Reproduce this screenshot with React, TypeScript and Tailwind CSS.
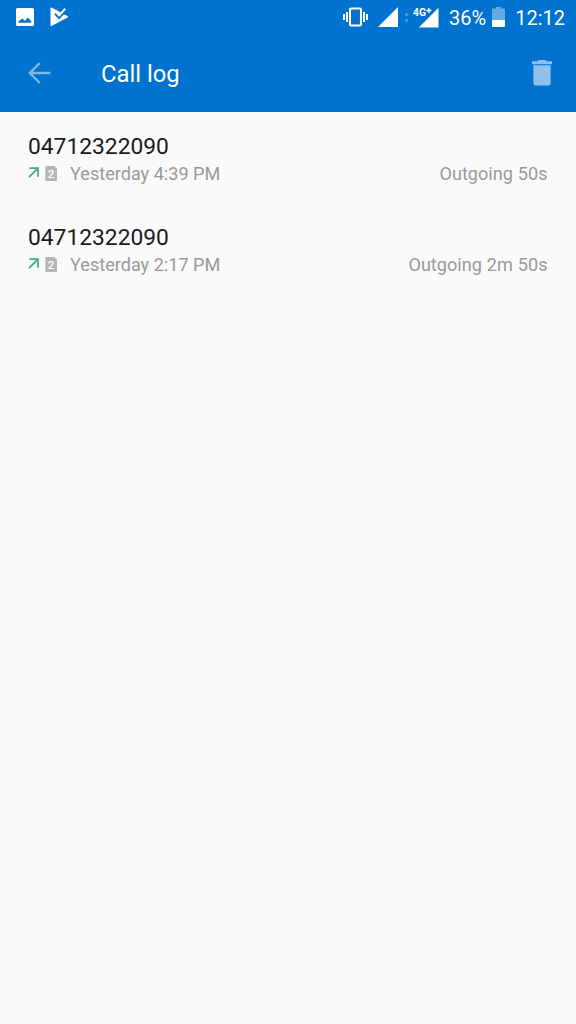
interface Call {
  id: number
  number: string
  time: string
  duration: string
}

const CALLS: Call[] = [
  { id: 1, number: '04712322090', time: 'Yesterday 4:39 PM', duration: 'Outgoing 50s' },
  { id: 2, number: '04712322090', time: 'Yesterday 2:17 PM', duration: 'Outgoing 2m 50s' },
]

function ImageIcon() {
  return (
    <svg className="w-[18px] h-[18px] shrink-0" viewBox="0 0 18 18">
      <path fill="white" fillRule="evenodd" d="M1.5 0h15A1.5 1.5 0 0 1 18 1.5v15a1.5 1.5 0 0 1-1.5 1.5h-15A1.5 1.5 0 0 1 0 16.5v-15A1.5 1.5 0 0 1 1.5 0zM2.5 14.8h12.8v-1.2l-3.4-4.2-2.9 3.5-2.5-2.5-4 3.2z" />
    </svg>
  )
}

function PlayCheckIcon() {
  return (
    <svg className="w-[19px] h-[20px] shrink-0" viewBox="0 0 19 20">
      <path fill="white" d="M.5 1.2v17.3q0 1.1 1 .6L17.6 10.5q1-.8 0-1.5L1.5.6Q.5.2.5 1.2z" />
      <path fill="#0072d0" d="M7 3.2L11.2 5.8 14.6 2l3 4.5L14 7.8z" />
      <path fill="none" stroke="#0072d0" strokeWidth="2.1" d="M5 6.6l4 4.3L16.2 3.4" />
      <path fill="none" stroke="white" strokeWidth="2" d="M6.2 5.3l3 3L15.2 1.8" />
    </svg>
  )
}

function VibrateIcon() {
  return (
    <svg className="w-[26px] h-[20px] shrink-0" viewBox="0 0 26 20" fill="none" stroke="white" strokeWidth="2">
      <rect x="7" y="1.5" width="11" height="17" rx="1" />
      <path d="M1 7v6M4 5v10M21 5v10M24 7v6" />
    </svg>
  )
}

function SignalIcon() {
  return (
    <svg className="w-5 h-5 shrink-0" viewBox="0 0 20 20">
      <path fill="white" d="M20 0v20H0z" />
    </svg>
  )
}

function DataSignalIcon() {
  return (
    <svg className="w-[27px] h-[29px] shrink-0" viewBox="-1 -4 27 29">
      <path fill="white" d="M25.5 .8v19.7H5.8z" />
      <path fill="none" stroke="#0072d0" strokeWidth="3.6" d="M13 3.4h6.3M16 .4v6.2" />
      <text x="0" y="9.2" fill="white" stroke="#0072d0" strokeWidth="2" paintOrder="stroke" fontSize="11.5" fontWeight="700" textLength="13" lengthAdjust="spacingAndGlyphs" className="font-[Roboto,sans-serif]">4G</text>
      <path fill="none" stroke="white" strokeWidth="1.4" d="M13.3 3.5h5.2M15.9 .9v5.2" />
    </svg>
  )
}

function BatteryIcon() {
  return (
    <svg className="w-[13px] h-[20px] shrink-0" viewBox="0 0 13 20">
      <path fill="#66aae2" d="M4 0h5v1.5h3a1 1 0 0 1 1 1V13H0V2.5a1 1 0 0 1 1-1h3z" />
      <path fill="white" d="M0 13h13v6a1 1 0 0 1-1 1H1a1 1 0 0 1-1-1z" />
    </svg>
  )
}

function BackIcon() {
  return (
    <svg className="w-[23px] h-[22px] shrink-0" viewBox="0 0 23 22" fill="none" stroke="#80b9e8" strokeWidth="2.4">
      <path d="M22.4 11H1.8M11.8 1L1.8 11l10 10" />
    </svg>
  )
}

function TrashIcon() {
  return (
    <svg className="w-5 h-[26px] shrink-0" viewBox="0 0 20 26" fill="#8fc1ec">
      <path d="M6.5 0h7l1.2 1.2H20v3H0v-3h5.3zM1.4 5.2h17.2v18a2.4 2.4 0 0 1-2.4 2.4H3.8a2.4 2.4 0 0 1-2.4-2.4z" />
    </svg>
  )
}

function OutgoingIcon() {
  return (
    <svg className="w-[11px] h-[11px] shrink-0" viewBox="0 0 11 11" fill="none" stroke="#3bae70" strokeWidth="1.7">
      <path d="M1.4 1.2h8.6v8.6M9.8 1.4L1 10.2" />
    </svg>
  )
}

function SimIcon() {
  return (
    <svg className="w-3 h-[15px] shrink-0" viewBox="0 0 12 15">
      <path fill="#b5b5b5" d="M1.3 0h8L12 2.8V14a1 1 0 0 1-1 1H1.3a1 1 0 0 1-1-1V1a1 1 0 0 1 1-1z" />
      <text x="6.1" y="11.6" fill="white" fontSize="11.5" fontWeight="500" textAnchor="middle" className="font-[Roboto,sans-serif]">2</text>
    </svg>
  )
}

function CallRow({ call }: { call: Call }) {
  return (
    <li className="h-[91px] pt-[19px] pl-7 pr-[28.5px]">
      <div className="text-[22.8px] leading-[31px] text-[#1a1a1a]">{call.number}</div>
      <div className="flex items-center h-[23px] text-[18.1px] leading-[23px] text-[#999]">
        <span className="pb-[3px]"><OutgoingIcon /></span>
        <span className="ml-1.5 pb-px"><SimIcon /></span>
        <span className="ml-[13px] whitespace-nowrap">{call.time}</span>
        <span className="ml-auto whitespace-nowrap [word-spacing:0.5px]">{call.duration}</span>
      </div>
    </li>
  )
}

export default function App() {
  return (
    <div className="w-full h-screen overflow-hidden bg-[#fafafa] font-[Roboto,sans-serif]">
      <header className="h-28 bg-[#0072d0] text-white">
        {/* Status bar */}
        <div className="flex items-center h-[34px] pl-4 pr-[11px] text-[20px] leading-none">
          <ImageIcon />
          <span className="ml-4"><PlayCheckIcon /></span>
          <div className="flex items-center ml-auto">
            <VibrateIcon />
            <span className="ml-[9px]"><SignalIcon /></span>
            <span className="flex flex-col gap-[3px] ml-[7px]">
              <span className="w-[3px] h-[3px] rounded-full bg-[#4d9de0]" />
              <span className="w-[3px] h-[3px] rounded-full bg-[#4d9de0]" />
            </span>
            <span className="ml-1"><DataSignalIcon /></span>
            <span className="ml-2.5 pt-0.5">36%</span>
            <span className="ml-1.5"><BatteryIcon /></span>
            <span className="ml-2.5 pt-0.5">12:12</span>
          </div>
        </div>

        {/* Toolbar */}
        <div className="flex items-center h-[78px] pl-7 pr-6">
          <BackIcon />
          <h1 className="ml-[50px] text-[23.8px] leading-8 pt-0.5">Call log</h1>
          <span className="ml-auto"><TrashIcon /></span>
        </div>
      </header>

      <ul>
        {CALLS.map(call => <CallRow key={call.id} call={call} />)}
      </ul>
    </div>
  )
}
